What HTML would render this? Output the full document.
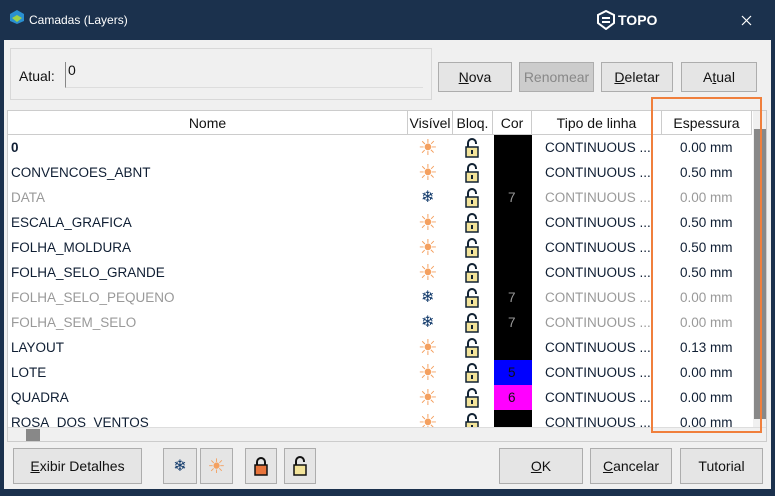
<!DOCTYPE html>
<html><head><style>
*{box-sizing:border-box;margin:0;padding:0}
body{width:775px;height:496px;background:#1b314d;font-family:"Liberation Sans",sans-serif;position:relative;overflow:hidden;font-size:14px;color:#111}
.abs{position:absolute}
.title{left:0;top:0;width:775px;height:40px;color:#fff}
.client{left:4px;top:40px;width:767px;height:449px;background:#f0f0f0}
.btn{position:absolute;background:#e5e5e5;border:1px solid #adadad;text-align:center;font-size:14px;display:flex;align-items:center;justify-content:center}
.tbl{left:7px;top:110px;width:760px;height:332px;background:#fff;border:1px solid #ccc;overflow:hidden}
.hdr{position:absolute;top:0;height:24px;border-right:1px solid #ccc;border-bottom:1px solid #ccc;background:#fff;font-size:14px;text-align:center;line-height:24px}
.row{position:absolute;left:0;width:745px;height:25px;font-size:13.5px;line-height:25px;color:#0f1e33}
.row span{position:absolute;top:0}
.row.g{color:#999}
</style></head><body>
<div class="abs title">
 <svg class="abs" style="left:9px;top:9px" width="16" height="16"><polygon points="8,1 15,5 15,12 8,15 1,12 1,5" fill="#2a8fd0"/><polygon points="8,6 13,9 8,13 3,9" fill="#9cd04a"/></svg>
 <div class="abs" style="left:29px;top:13px;font-size:12px">Camadas (Layers)</div>
 <svg class="abs" style="left:596px;top:10px" width="20" height="20"><path d="M10 1 L18 5 L18 13 L10 19 L2 13 L2 5Z" fill="none" stroke="#fff" stroke-width="2"/><path d="M6 8 L14 8 M6 12 L14 12" stroke="#fff" stroke-width="2"/></svg>
 <div class="abs" style="left:618px;top:12px;font-size:14px;font-weight:bold">TOPO</div>
 <svg class="abs" style="left:741px;top:15px" width="11" height="11"><path d="M1 1L10 10M10 1L1 10" stroke="#fff" stroke-width="1.2"/></svg>
</div>
<div class="abs client"></div>
<div class="abs" style="left:10px;top:48px;width:422px;height:52px;border:1px solid #d8d8d8"></div>
<div class="abs" style="left:19px;top:68px;font-size:14px">Atual:</div>
<div class="abs" style="left:65px;top:62px;width:358px;height:26px;background:#f0f0f0;border-left:1px solid #888;border-bottom:1px solid #ddd;padding-left:2px;font-size:14px">0</div>
<div class="btn" style="left:438px;top:62px;width:74px;height:30px"><u>N</u>ova</div>
<div class="btn" style="left:519px;top:62px;width:75px;height:30px;background:#ccc;color:#888">Renomear</div>
<div class="btn" style="left:601px;top:62px;width:72px;height:30px"><u>D</u>eletar</div>
<div class="btn" style="left:681px;top:62px;width:76px;height:30px">A<u>t</u>ual</div>

<div class="abs tbl">
 <div class="hdr" style="left:0;width:400px">Nome</div>
 <div class="hdr" style="left:400px;width:45px">Visível</div>
 <div class="hdr" style="left:445px;width:40px">Bloq.</div>
 <div class="hdr" style="left:485px;width:39px">Cor</div>
 <div class="hdr" style="left:524px;width:130px">Tipo de linha</div>
 <div class="hdr" style="left:654px;width:90px">Espessura</div>
 <div class="abs" style="left:486px;top:24px;width:38px;height:300px;background:#000"></div>
 <div class="abs" style="left:486px;top:249px;width:38px;height:25px;background:#0000ff"></div>
 <div class="abs" style="left:486px;top:274px;width:38px;height:25px;background:#ff00ff"></div>
 <div id="rows"></div>
 <div class="abs" style="left:745px;top:0;width:14px;height:316px;background:#f0f0f0"></div>
 <div class="abs" style="left:746px;top:18px;width:12px;height:290px;background:#888"></div>
 <div class="abs" style="left:0;top:316px;width:760px;height:16px;background:#f0f0f0;border-top:1px solid #ddd"></div>
 <div class="abs" style="left:18px;top:318px;width:14px;height:12px;background:#888"></div>
</div>
<div class="abs" style="left:651px;top:97px;width:111px;height:336px;border:2px solid #f07f3c"></div>

<div class="btn" style="left:13px;top:448px;width:129px;height:36px"><u>E</u>xibir Detalhes</div>
<div class="btn" style="left:163px;top:448px;width:34px;height:36px;color:#123a6b;font-size:16px">❄</div>
<div class="btn" style="left:200px;top:448px;width:33px;height:36px;color:#f4a060;font-size:20px">☀</div>
<div class="btn" style="left:245px;top:448px;width:32px;height:36px"><svg width="14" height="20"><path d="M3 9V6a4 4 0 0 1 8 0v3" fill="none" stroke="#111" stroke-width="2"/><rect x="1" y="9" width="12" height="10" fill="#e8743b" stroke="#111" stroke-width="1.5"/></svg></div>
<div class="btn" style="left:284px;top:448px;width:32px;height:36px"><svg width="14" height="20"><path d="M3 9V5a4 4 0 0 1 8 0v1" fill="none" stroke="#111" stroke-width="2"/><rect x="1" y="9" width="12" height="10" fill="#f3e49a" stroke="#111" stroke-width="1.5"/></svg></div>
<div class="btn" style="left:499px;top:448px;width:84px;height:36px"><u>O</u>K</div>
<div class="btn" style="left:590px;top:448px;width:82px;height:36px"><u>C</u>ancelar</div>
<div class="btn" style="left:680px;top:448px;width:83px;height:36px">Tutorial</div>
<script>
var d=[["0",1,"","0.00",1],["CONVENCOES_ABNT",1,"","0.50"],["DATA",0,"7","0.00"],["ESCALA_GRAFICA",1,"","0.50"],["FOLHA_MOLDURA",1,"","0.50"],["FOLHA_SELO_GRANDE",1,"","0.50"],["FOLHA_SELO_PEQUENO",0,"7","0.00"],["FOLHA_SEM_SELO",0,"7","0.00"],["LAYOUT",1,"","0.13"],["LOTE",1,"5","0.00"],["QUADRA",1,"6","0.00"],["ROSA_DOS_VENTOS",1,"","0.00"]];
var h="";d.forEach(function(r,i){var g=r[1]?"":" g";var cc=r[2]=="7"?"#999":"#111";
h+='<div class="row'+g+'" style="top:'+(24+i*25)+'px"><span style="left:3px;'+(r[4]?'font-weight:bold':'')+'">'+r[0]+'</span>'+
(r[1]?'<span style="left:410px;font-size:22px;color:#f4a060;line-height:25px">☀</span>':'<span style="left:413px;font-size:16px;color:#123a6b">❄</span>')+
'<span style="left:456px;top:2px"><svg width="16" height="22"><path d="M4 10V6a4 4 0 0 1 8 0v1" fill="none" stroke="#123" stroke-width="2"/><rect x="2" y="10" width="12" height="10" fill="#f3e49a" stroke="#123" stroke-width="1.5"/><rect x="7" y="13" width="2" height="4" fill="#123"/></svg></span>'+
'<span style="left:500px;color:'+cc+'">'+r[2]+'</span><span style="left:537px">CONTINUOUS ...</span><span style="left:672px">'+r[3]+' mm</span></div>';});
document.getElementById("rows").innerHTML=h;
</script>
</body></html>
